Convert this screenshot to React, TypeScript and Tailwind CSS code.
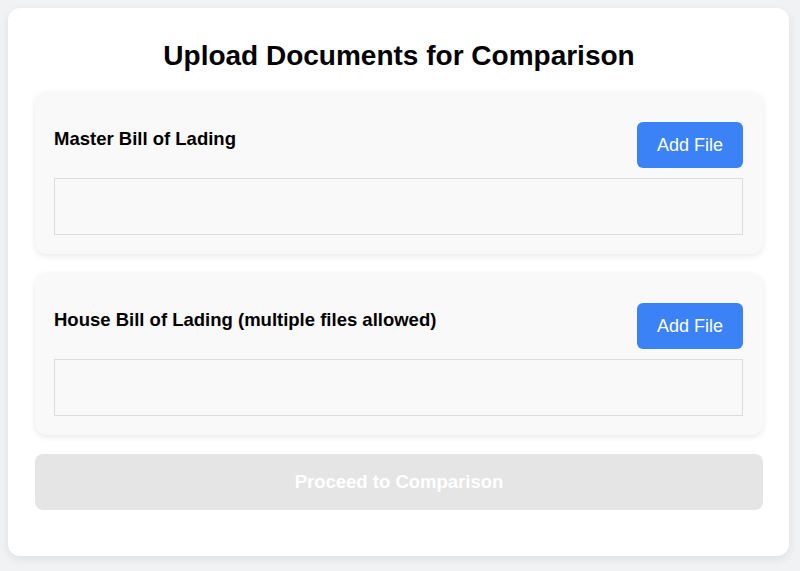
import { useState } from "react";

// ─── Upload slot ───────────────────────────────────────────────────────────────
function UploadSection({
  label,
  files,
  onAdd,
}: {
  label: string;
  files: string[];
  onAdd: () => void;
}) {
  return (
    <div className="rounded-xl bg-[#f9f9f9] pl-[19px] pr-5 pt-[30px] pb-[19px] shadow-[0_2px_6px_rgba(0,0,0,0.09)]">
      <div className="flex items-start justify-between">
        <h3 className="pt-[6px] text-[18.5px] font-bold leading-[normal] text-black">{label}</h3>
        <button
          onClick={onAdd}
          className="h-[46px] w-[106px] rounded-md bg-[#3b82f6] text-[18px] leading-[normal] text-white"
        >
          Add File
        </button>
      </div>
      {/* File list */}
      <div className="mt-[10px] h-[57px] border border-[#dddddd] bg-[#f9f9f9]">
        {files.map((f) => (
          <div key={f} className="px-3 py-1 text-sm">
            {f}
          </div>
        ))}
      </div>
    </div>
  );
}

// ─── Main ─────────────────────────────────────────────────────────────────────
export default function App() {
  const [master, setMaster] = useState<string[]>([]);
  const [house, setHouse] = useState<string[]>([]);
  const ready = master.length > 0 && house.length > 0;

  return (
    <div className="min-h-screen bg-[#f1f2f4] pl-2 pt-2 font-['Liberation_Sans',Arial,sans-serif]">
      <div className="w-[781px] rounded-xl bg-white pl-[27px] pr-[26px] pt-[32px] pb-[46px] shadow-[0_3px_10px_rgba(0,0,0,0.08)]">
        <h1 className="mb-[20px] text-center text-[28px] font-bold leading-[normal] text-black">
          Upload Documents for Comparison
        </h1>

        <div className="flex flex-col gap-[19px]">
          <UploadSection label="Master Bill of Lading" files={master} onAdd={() => setMaster(master)} />
          <UploadSection
            label="House Bill of Lading (multiple files allowed)"
            files={house}
            onAdd={() => setHouse(house)}
          />
          <button
            disabled={!ready}
            className={[
              "h-[56px] w-full rounded-lg text-[18.5px] font-bold leading-[normal] text-white",
              ready ? "bg-[#3b82f6]" : "bg-[#e5e5e5] cursor-not-allowed",
            ].join(" ")}
          >
            Proceed to Comparison
          </button>
        </div>
      </div>
    </div>
  );
}
